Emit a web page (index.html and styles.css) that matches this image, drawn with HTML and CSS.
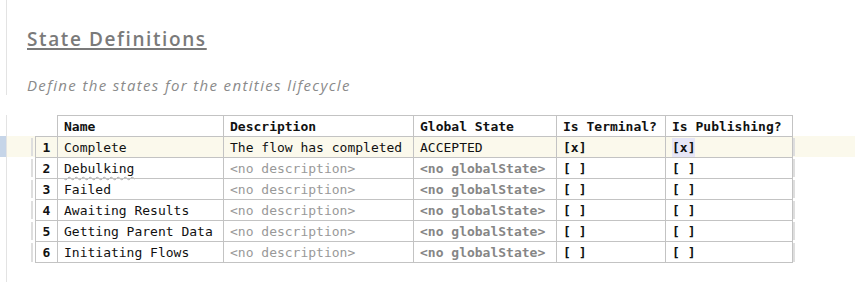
FILE: index.html
```html
<!DOCTYPE html>
<html lang="en">
<head>
    <meta charset="UTF-8">
    <meta name="viewport" content="width=device-width, initial-scale=1.0">
    <title>State Definitions</title>
    <link rel="stylesheet" href="styles.css">
</head>
<body>
    <div class="editor">
        <div class="line line-title">
            <div class="gutter"></div>
            <div class="code"><h1 class="title">State Definitions</h1></div>
        </div>
        <div class="line line-sub">
            <div class="gutter"></div>
            <div class="code"><p class="subtitle">Define the states for the entities lifecycle</p></div>
        </div>

        <div class="line row head">
            <div class="gutter"></div>
            <div class="code">
                <span class="bar blank"></span>
                <span class="cell num blank"></span>
                <span class="cell c-name">Name</span>
                <span class="cell c-desc">Description</span>
                <span class="cell c-global">Global State</span>
                <span class="cell c-term">Is Terminal?</span>
                <span class="cell c-pub">Is Publishing?</span>
            </div>
        </div>

        <div class="line row current">
            <div class="gutter"></div>
            <div class="code">
                <span class="bar"></span>
                <span class="cell num">1</span>
                <span class="cell c-name">Complete</span>
                <span class="cell c-desc">The flow has completed</span>
                <span class="cell c-global">ACCEPTED</span>
                <span class="cell c-term flag">[x]</span>
                <span class="cell c-pub flag"><span class="caret">[x]</span></span>
                <span class="bar"></span>
            </div>
        </div>

        <div class="line row">
            <div class="gutter"></div>
            <div class="code">
                <span class="bar"></span>
                <span class="cell num">2</span>
                <span class="cell c-name"><span class="typo">Debulking</span></span>
                <span class="cell c-desc empty">&lt;no description&gt;</span>
                <span class="cell c-global empty-ref">&lt;no globalState&gt;</span>
                <span class="cell c-term flag">[ ]</span>
                <span class="cell c-pub flag">[ ]</span>
                <span class="bar"></span>
            </div>
        </div>

        <div class="line row">
            <div class="gutter"></div>
            <div class="code">
                <span class="bar"></span>
                <span class="cell num">3</span>
                <span class="cell c-name">Failed</span>
                <span class="cell c-desc empty">&lt;no description&gt;</span>
                <span class="cell c-global empty-ref">&lt;no globalState&gt;</span>
                <span class="cell c-term flag">[ ]</span>
                <span class="cell c-pub flag">[ ]</span>
                <span class="bar"></span>
            </div>
        </div>

        <div class="line row">
            <div class="gutter"></div>
            <div class="code">
                <span class="bar"></span>
                <span class="cell num">4</span>
                <span class="cell c-name">Awaiting Results</span>
                <span class="cell c-desc empty">&lt;no description&gt;</span>
                <span class="cell c-global empty-ref">&lt;no globalState&gt;</span>
                <span class="cell c-term flag">[ ]</span>
                <span class="cell c-pub flag">[ ]</span>
                <span class="bar"></span>
            </div>
        </div>

        <div class="line row">
            <div class="gutter"></div>
            <div class="code">
                <span class="bar"></span>
                <span class="cell num">5</span>
                <span class="cell c-name">Getting Parent Data</span>
                <span class="cell c-desc empty">&lt;no description&gt;</span>
                <span class="cell c-global empty-ref">&lt;no globalState&gt;</span>
                <span class="cell c-term flag">[ ]</span>
                <span class="cell c-pub flag">[ ]</span>
                <span class="bar"></span>
            </div>
        </div>

        <div class="line row last">
            <div class="gutter"></div>
            <div class="code">
                <span class="bar"></span>
                <span class="cell num">6</span>
                <span class="cell c-name">Initiating Flows</span>
                <span class="cell c-desc empty">&lt;no description&gt;</span>
                <span class="cell c-global empty-ref">&lt;no globalState&gt;</span>
                <span class="cell c-term flag">[ ]</span>
                <span class="cell c-pub flag">[ ]</span>
                <span class="bar"></span>
            </div>
        </div>

        <div class="line fill">
            <div class="gutter"></div>
            <div class="code"></div>
        </div>
    </div>
</body>
</html>
```

FILE: styles.css
```css
* {
    margin: 0;
    padding: 0;
    box-sizing: border-box;
}

body {
    background: #fff;
    font-family: 'DejaVu Sans Mono', 'Liberation Mono', monospace;
    font-size: 13px;
    color: #111;
}

.editor {
    min-height: 100vh;
    display: flex;
    flex-direction: column;
}

.line {
    display: flex;
}

.gutter {
    width: 7px;
    flex-shrink: 0;
    border-right: 1px solid #e3e3e3;
}

.code {
    flex: 1;
    display: flex;
}

.fill {
    flex: 1;
}

/* heading */

.line-title .code {
    padding: 27px 0 0 20px;
}

.title {
    font-family: 'Open Sans', 'Noto Sans', sans-serif;
    font-size: 19px;
    font-weight: 600;
    line-height: 24px;
    letter-spacing: 1.6px;
    color: #7a7a7a;
    text-decoration: underline;
    text-decoration-thickness: 2px;
    text-underline-offset: 2px;
}

.line-sub .code {
    padding: 24px 0 0 20px;
}

.subtitle {
    font-family: 'Open Sans', 'Noto Sans', sans-serif;
    font-size: 15px;
    font-style: italic;
    line-height: 20px;
    letter-spacing: 1.35px;
    color: #8a8a8a;
}

/* table rows */

.head {
    margin-top: 20px;
}

.row .code {
    padding-left: 24px;
}

.bar {
    width: 2px;
    margin: 2px 2px 1px 0;
    background: #dedede;
}

.bar:last-child {
    margin: 2px 0 1px 0;
}

.bar.blank {
    background: none;
}

.cell {
    flex-shrink: 0;
    height: 21px;
    line-height: 22px;
    padding-left: 6px;
    border-left: 1px solid #c3c3c3;
    border-top: 1px solid #c3c3c3;
    white-space: pre;
}

.last .cell {
    height: 22px;
    border-bottom: 1px solid #c3c3c3;
}

.cell.blank {
    border: none;
}

.head .cell {
    font-weight: bold;
}

.num {
    width: 22px;
    padding: 0;
    text-align: center;
    font-weight: bold;
}

.c-name { width: 166px; }
.c-desc { width: 190px; }
.c-global { width: 143px; }
.c-term { width: 109px; }

.c-pub {
    width: 128px;
    border-right: 1px solid #c3c3c3;
}

.flag {
    font-weight: bold;
}

.empty {
    color: #999;
}

.empty-ref {
    color: #868686;
    font-weight: bold;
}

.typo {
    text-decoration: underline wavy #a8a8a8;
    text-decoration-thickness: 1px;
    text-underline-offset: 3px;
}

/* selected line */

.current .gutter {
    background: #c6d5e8;
}

.current .code {
    background: #fbf9ec;
}

.caret {
    display: inline-block;
    line-height: 20px;
    height: 20px;
    background: #e6e6f7;
}
```
